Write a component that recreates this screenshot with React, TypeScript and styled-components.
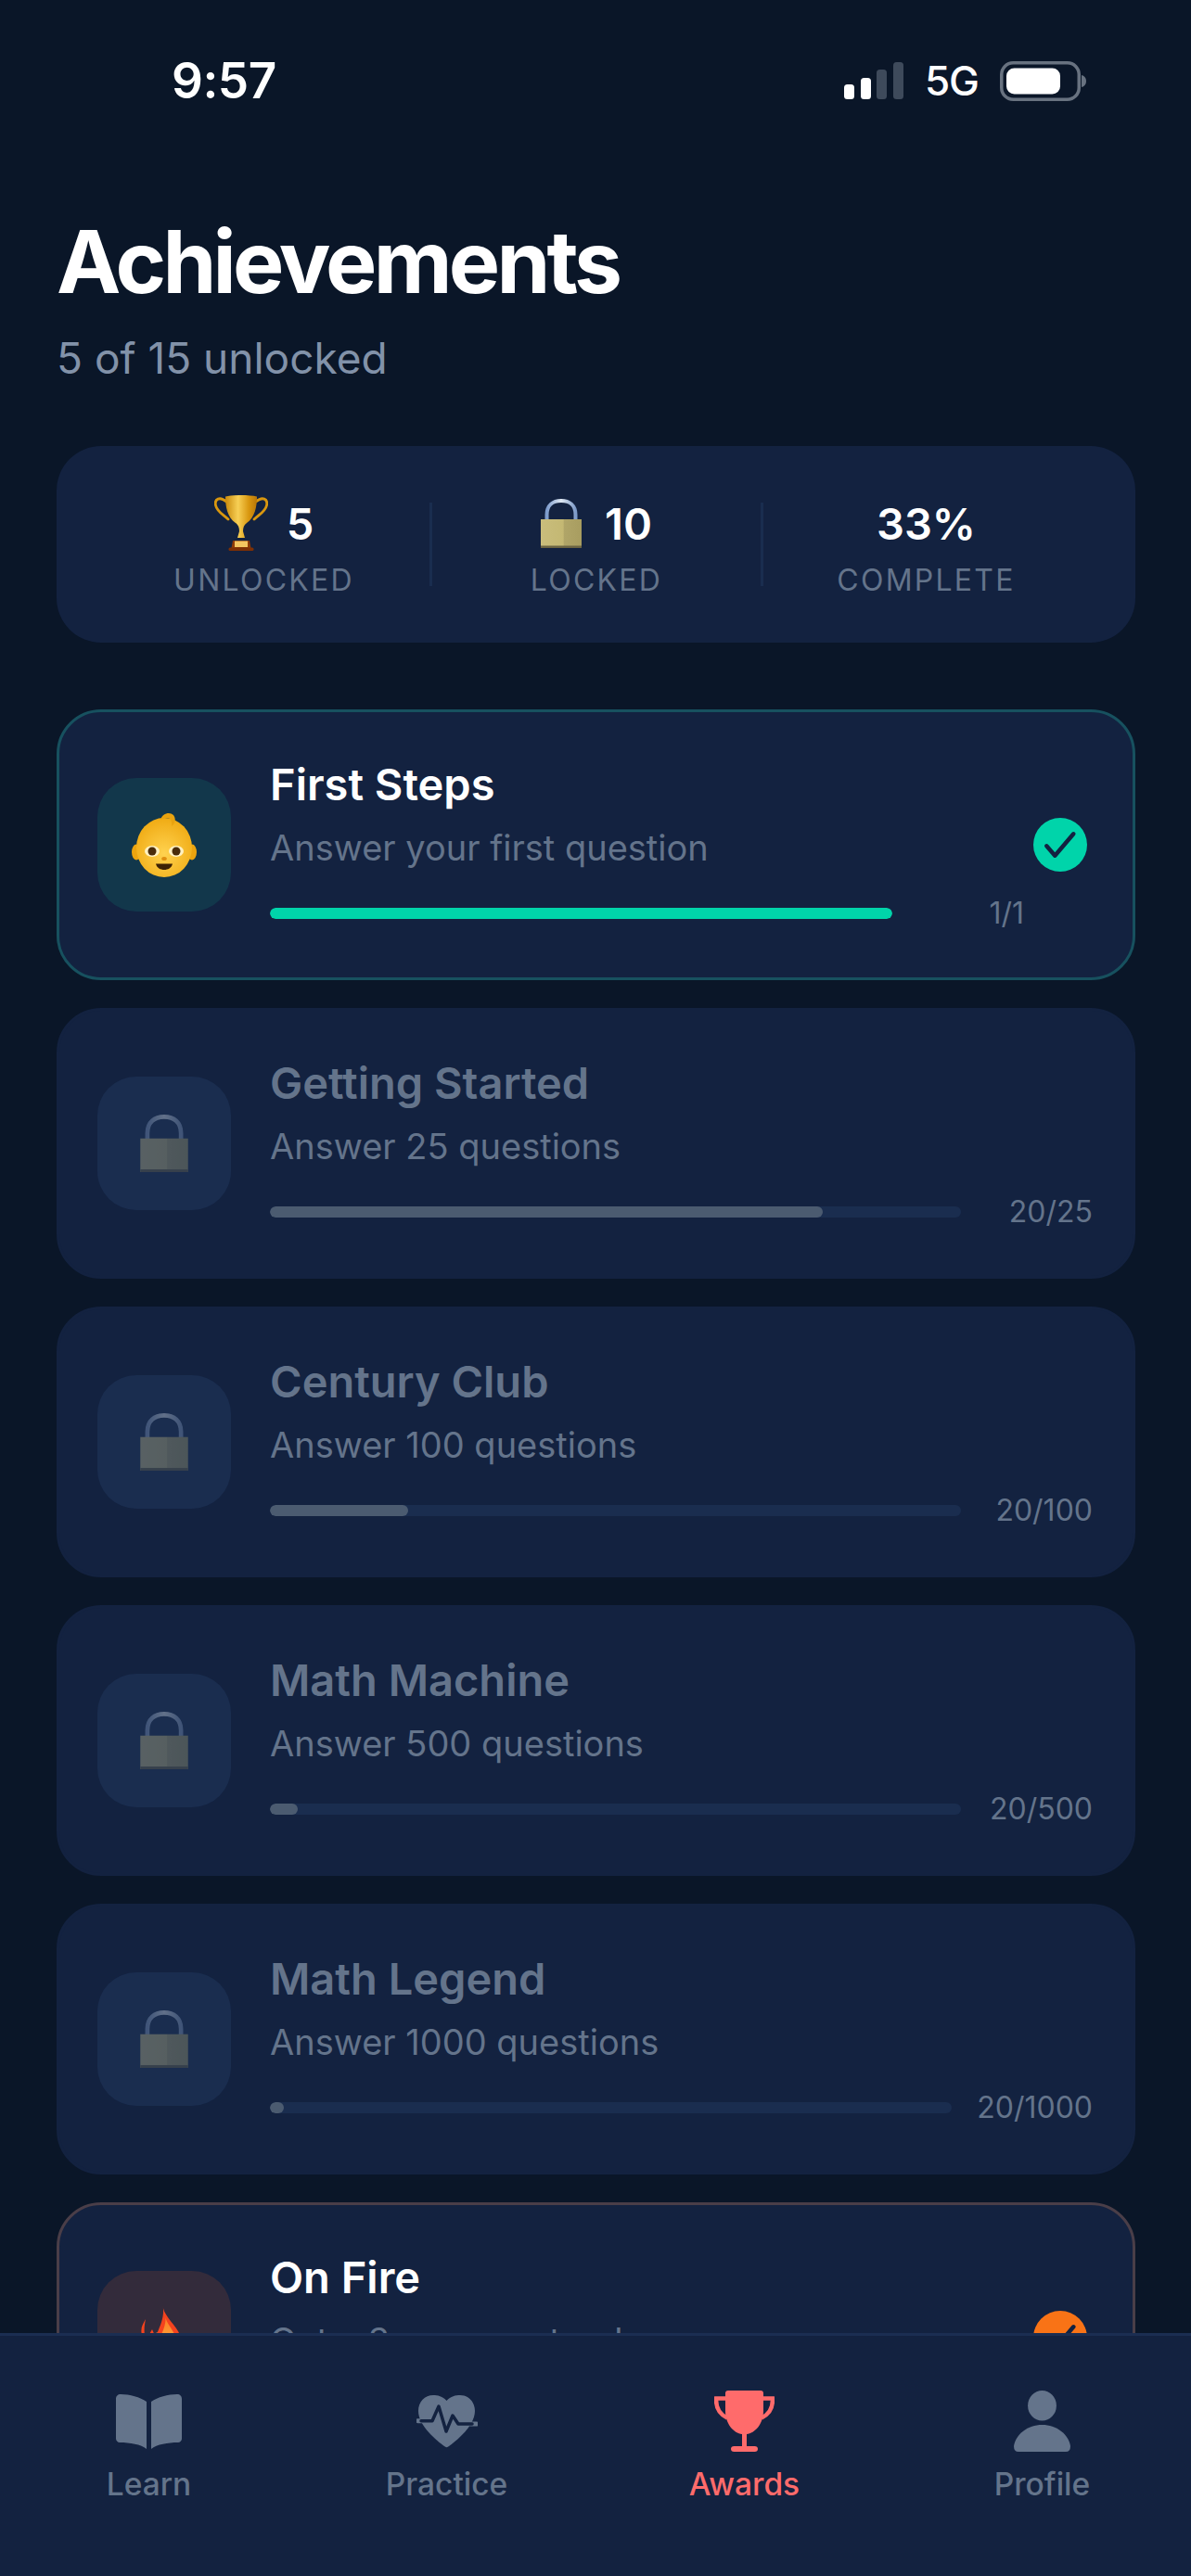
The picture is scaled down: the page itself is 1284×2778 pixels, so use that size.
import React from "react";
import styled, { createGlobalStyle } from "styled-components";

const Global = createGlobalStyle`
  html, body { margin: 0; padding: 0; background: #0a1628; }
  * { box-sizing: border-box; }
`;

const Screen = styled.div`
  width: 1284px;
  height: 2778px;
  display: flex;
  flex-direction: column;
  overflow: hidden;
  background: #0a1628;
  font-family: Inter, "Liberation Sans", sans-serif;
  color: #fff;
`;
const Scroll = styled.main`
  flex: 1;
  min-height: 0;
  overflow: hidden;
`;
const StatusBar = styled.div`
  height: 174px;
  display: flex;
  align-items: center;
  justify-content: space-between;
  padding: 0 113px 0 185px;
`;
const Time = styled.span`
  font-size: 53px;
  font-weight: 600;
  letter-spacing: -0.5px;
`;
const StatusRight = styled.div`
  display: flex;
  align-items: center;
  gap: 23px;
`;
const Net = styled.span`
  font-size: 44px;
  font-weight: 500;
  letter-spacing: -1px;
`;
const Header = styled.header`
  padding: 58px 61px 0;
`;
const Title = styled.h1`
  margin: 0;
  font-size: 93px;
  line-height: 100px;
  font-weight: 700;
  letter-spacing: -3.8px;
`;
const Subtitle = styled.p`
  margin: 26px 0 0;
  font-size: 46px;
  line-height: 56px;
  color: #8292a9;
`;
const Stats = styled.section`
  margin: 67px 60px 0 61px;
  height: 212px;
  border-radius: 48px;
  background: #132240;
  padding: 0 50px 0 45px;
  display: grid;
  grid-template-columns: 357px 3px 354px 3px 1fr;
  align-items: center;
`;
const Stat = styled.div`
  display: flex;
  flex-direction: column;
  align-items: center;
  padding-top: 6px;
`;
const StatValue = styled.div<{ $gap: number }>`
  display: flex;
  align-items: center;
  gap: ${(p) => p.$gap}px;
  height: 60px;
  font-size: 47px;
  font-weight: 600;
`;
const StatLabel = styled.div`
  margin-top: 12px;
  font-size: 32px;
  line-height: 40px;
  letter-spacing: 2.25px;
  color: #64748b;
`;
const Divider = styled.div`
  height: 90px;
  background: #1a2d4f;
`;
const List = styled.section`
  margin: 72px 60px 0 61px;
  display: flex;
  flex-direction: column;
  gap: 30px;
`;
const Card = styled.article<{ $accent?: string }>`
  height: 292px;
  flex: none;
  border-radius: 48px;
  background: #132240;
  border: 3px solid ${(p) => p.$accent ?? "#132240"};
  padding: 0 43px 0 41px;
  display: flex;
  align-items: center;
  gap: 42px;
`;
const IconBox = styled.div<{ $bg: string }>`
  flex: none;
  width: 144px;
  height: 144px;
  border-radius: 42px;
  background: ${(p) => p.$bg};
  display: flex;
  align-items: center;
  justify-content: center;
`;
const DimIcon = styled.span`
  display: flex;
  opacity: 0.36;
  filter: saturate(0.8);
`;
const Body = styled.div`
  flex: 1;
  min-width: 0;
`;
const CardTitle = styled.h2<{ $locked: boolean }>`
  margin: 0;
  font-size: 47px;
  line-height: 56px;
  font-weight: 600;
  color: ${(p) => (p.$locked ? "#64748b" : "#fff")};
`;
const CardDesc = styled.p`
  margin: 16px 0 0;
  font-size: 38px;
  line-height: 48px;
  color: #64748b;
`;
const ProgressRow = styled.div`
  margin-top: 27px;
  height: 40px;
  display: flex;
  align-items: center;
  gap: 27px;
`;
const Track = styled.div`
  flex: 1;
  height: 12px;
  border-radius: 6px;
  background: #1a2d4f;
  overflow: hidden;
`;
const Fill = styled.div<{ $color: string }>`
  height: 100%;
  border-radius: 6px;
  background: ${(p) => p.$color};
`;
const Count = styled.span`
  flex: none;
  min-width: 115px;
  text-align: right;
  font-size: 32px;
  line-height: 40px;
  color: #64748b;
`;
const CheckBadge = styled.svg`
  flex: none;
  margin: 0 6px 0 -32px;
  width: 58px;
  height: 58px;
  display: block;
`;
const TabBar = styled.nav`
  flex: none;
  height: 262px;
  background: #132240;
  border-top: 3px solid #1b2e52;
  display: grid;
  grid-template-columns: repeat(4, 1fr);
`;
const Tab = styled.div<{ $active?: boolean }>`
  display: flex;
  flex-direction: column;
  align-items: center;
  color: ${(p) => (p.$active ? "#ff6b6b" : "#64748b")};
`;
const TabIcon = styled.div`
  height: 66px;
  margin-top: 59px;
  display: flex;
  align-items: center;
  justify-content: center;
`;
const TabLabel = styled.span`
  margin-top: 15px;
  font-size: 33.500px;
  line-height: 40px;
  font-weight: 500;
`;

const SignalIcon = () => (
  <svg width="64" height="40" viewBox="0 0 64 40" aria-hidden>
    <rect x="0" y="24" width="11" height="16" rx="3.5" fill="#fff" />
    <rect x="18" y="17" width="11" height="23" rx="3.5" fill="#fff" />
    <rect x="35" y="8" width="11" height="32" rx="3.5" fill="#3e4a5b" />
    <rect x="53" y="0" width="11" height="40" rx="3.5" fill="#3e4a5b" />
  </svg>
);
const BatteryIcon = () => (
  <svg width="93" height="43" viewBox="0 0 93 43" aria-hidden>
    <rect x="1.75" y="1.75" width="83.5" height="39.5" rx="12.5" fill="none" stroke="#687280" strokeWidth="3.5" />
    <rect x="7" y="7.5" width="58" height="28" rx="8.5" fill="#fff" />
    <path d="M88 15c3 .6 5 3 5 6.5s-2 5.900-5 6.500z" fill="#687280" />
  </svg>
);
const TrophyEmoji = () => (
  <svg width="58" height="60" viewBox="0 0 58 60" aria-hidden>
    <defs>
      <linearGradient id="cupGold" x1="0" x2="1" y1="0" y2="0">
        <stop offset="0" stopColor="#c98a0c" />
        <stop offset="0.4" stopColor="#f7cf55" />
        <stop offset="0.75" stopColor="#d8960f" />
        <stop offset="1" stopColor="#b87608" />
      </linearGradient>
    </defs>
    <path d="M13 7C6 1 0 4 1.500 11 3 18 10 21 15 26M45 7C52 1 58 4 56.500 11 55 18 48 21 43 26" fill="none" stroke="#d9970f" strokeWidth="2.800" strokeLinecap="round" />
    <path d="M12 1.500C20 -.5 38 -.5 46 1.500 46 12 44 24 35 30 32 32 31 35 31 39L33 46H25L27 39C27 35 26 32 23 30 14 24 12 12 12 1.500Z" fill="url(#cupGold)" />
    <path d="M20 49H38L39.500 57H18.500Z" fill="#8f3b08" />
    <rect x="22" y="49.500" width="14" height="6.500" fill="#f3c561" />
    <rect x="15.500" y="56.500" width="27" height="3.500" rx="1.500" fill="#7c2f05" />
  </svg>
);
const LockEmoji = ({ w, h }: { w: number; h: number }) => (
  <svg width={w} height={h} viewBox="0 0 44 53" aria-hidden>
    <defs>
      <linearGradient id="lockBody" x1="0" x2="1" y1="0" y2="0">
        <stop offset="0" stopColor="#c9bd7c" />
        <stop offset="0.55" stopColor="#c4b873" />
        <stop offset="0.57" stopColor="#b0a568" />
        <stop offset="1" stopColor="#a89d60" />
      </linearGradient>
      <linearGradient id="lockShackle" x1="0" x2="1" y1="0" y2="0">
        <stop offset="0" stopColor="#7d9ccd" />
        <stop offset="0.5" stopColor="#dfe8f2" />
        <stop offset="1" stopColor="#7e9bc8" />
      </linearGradient>
    </defs>
    <path d="M6.500 23V17C6.500 7 13 2 22 2S37.500 7 37.500 17V23" fill="none" stroke="url(#lockShackle)" strokeWidth="4" />
    <rect x="0" y="22" width="44" height="31" fill="url(#lockBody)" />
    <rect x="0" y="50.500" width="44" height="2.500" fill="#6b6442" />
  </svg>
);
const BabyEmoji = () => (
  <svg width="70" height="70" viewBox="0 0 70 70" aria-hidden>
    <defs>
      <radialGradient id="babyFace" cx="0.5" cy="0.6" r="0.6">
        <stop offset="0" stopColor="#ffd24f" />
        <stop offset="1" stopColor="#f0ab14" />
      </radialGradient>
    </defs>
    <ellipse cx="5" cy="43" rx="5" ry="8.500" fill="#eca40f" />
    <ellipse cx="65" cy="43" rx="5" ry="8.500" fill="#eca40f" />
    <ellipse cx="35" cy="38" rx="30" ry="32" fill="url(#babyFace)" />
    <path d="M31 8C33 1 41 -1 45 3 48 7 47 12 43 15 44 10 42 6 38 6 35 6 33 7 31 8Z" fill="#e9a30f" />
    <ellipse cx="22" cy="42" rx="8" ry="6" fill="#fff1c2" />
    <ellipse cx="48" cy="42" rx="8" ry="6" fill="#fff1c2" />
    <circle cx="22" cy="42" r="4.500" fill="#4a2c0a" />
    <circle cx="48" cy="42" r="4.500" fill="#4a2c0a" />
    <ellipse cx="35" cy="50" rx="2.800" ry="2" fill="#e08f10" />
    <path d="M26 55.500H44C43 60 39 62 35 62S27 60 26 55.500Z" fill="#3d2205" />
  </svg>
);
const FlameEmoji = () => (
  <svg width="70" height="74" viewBox="0 0 70 74" aria-hidden>
    <defs>
      <linearGradient id="flameCore" x1="0" x2="0" y1="0" y2="1">
        <stop offset="0" stopColor="#fb7d24" />
        <stop offset="0.5" stopColor="#ffa53a" />
        <stop offset="1" stopColor="#ffc94d" />
      </linearGradient>
    </defs>
    <path d="M33.500 2C34 12 44 20 50 30 54 38 56 44 56 50 56 64 46 74 34 74 22 74 12 64 12 50 12 40 18 36 22 28 24 33 25 34 26 35 30 26 36 14 33.500 2Z" fill="#f4431e" />
    <path d="M36.500 15C38 24 50 32 50 50 50 62 42 70 34 70 24 70 18 60 18 50 18 44 24 38 27 31 29 34 30 34 31 35 34 30 37 22 36.500 15Z" fill="url(#flameCore)" />
    <path d="M15 17C12 22 9 27 11 34H14C13 28 14 22 15 17Z" fill="#f4431e" />
  </svg>
);
const Check = ({ color }: { color: string }) => (
  <CheckBadge viewBox="0 0 58 58" aria-hidden>
    <circle cx="29" cy="29" r="29" fill={color} />
    <path d="M14.300 30.300L23.300 40.700L43.300 17.300" fill="none" stroke="#132240" strokeWidth="4.500" strokeLinecap="round" strokeLinejoin="round" />
  </CheckBadge>
);
const BookIcon = () => (
  <svg width="71" height="59" viewBox="0 0 71 59" fill="currentColor" aria-hidden>
    <path d="M0 5C0 2 2 0 5 0 15 0 26 3 33 8V59C27 54 15 52 4 52 2 52 0 50 0 48Z" />
    <path d="M71 5C71 2 69 0 66 0 56 0 45 3 38 8V59C44 54 56 52 67 52 69 52 71 50 71 48Z" />
  </svg>
);
const HeartIcon = () => (
  <svg width="66" height="58" viewBox="0 0 66 58" aria-hidden>
    <path fill="currentColor" d="M32.500 7C28 2 23 1 18 1 9 1 2 8 2 18 2 34 22 50 30 56 31.500 57.500 33.500 57.500 35 56 43 50 63 34 63 18 63 8 56 1 47 1 42 1 37 2 32.500 7Z" />
    <path d="M1.500 28.700H8M58 32H64.500" stroke="currentColor" strokeWidth="5" strokeLinecap="round" fill="none" />
    <path d="M5 28.700H17L24 13 32 40 39 23 45 32H60" fill="none" stroke="#132240" strokeWidth="3.500" strokeLinecap="round" strokeLinejoin="round" />
  </svg>
);
const TrophyIcon = () => (
  <svg width="65" height="66" viewBox="0 0 65 66" aria-hidden>
    <path d="M14 8.500H2.200C1.500 18 5 25 14 29.500M51 8.500H62.800C63.500 18 60 25 51 29.500" fill="none" stroke="currentColor" strokeWidth="4.500" />
    <path fill="currentColor" d="M15 0H50Q53 0 53 3V22C53 36 44 46 35 47V60H43.500Q47 60 47 63T43.500 66H21.500Q18 66 18 63T21.500 60H30V47C21 46 12 36 12 22V3Q12 0 15 0Z" />
  </svg>
);
const PersonIcon = () => (
  <svg width="61" height="66" viewBox="0 0 61 66" fill="currentColor" aria-hidden>
    <ellipse cx="30.500" cy="16.300" rx="15.400" ry="16.300" />
    <path d="M5 66Q0 66 0 60C2 47 15 37 30.500 37S59 47 61 60Q61 66 56 66Z" />
  </svg>
);

const lockedCards = [
  { title: "Getting Started", desc: "Answer 25 questions", current: 20, total: 25 },
  { title: "Century Club", desc: "Answer 100 questions", current: 20, total: 100 },
  { title: "Math Machine", desc: "Answer 500 questions", current: 20, total: 500 },
  { title: "Math Legend", desc: "Answer 1000 questions", current: 20, total: 1000 },
];

export default function App() {
  return (
    <Screen>
      <Global />
      <Scroll>
        <StatusBar>
          <Time>9:57</Time>
          <StatusRight>
            <SignalIcon />
            <Net>5G</Net>
            <BatteryIcon />
          </StatusRight>
        </StatusBar>
        <Header>
          <Title>Achievements</Title>
          <Subtitle>5 of 15 unlocked</Subtitle>
        </Header>
        <Stats>
          <Stat>
            <StatValue $gap={20}>
              <TrophyEmoji />5
            </StatValue>
            <StatLabel>UNLOCKED</StatLabel>
          </Stat>
          <Divider />
          <Stat>
            <StatValue $gap={25}>
              <LockEmoji w={44} h={53} />10
            </StatValue>
            <StatLabel>LOCKED</StatLabel>
          </Stat>
          <Divider />
          <Stat>
            <StatValue $gap={0}>33%</StatValue>
            <StatLabel>COMPLETE</StatLabel>
          </Stat>
        </Stats>
        <List>
          <Card $accent="#17515f">
            <IconBox $bg="#12374b">
              <BabyEmoji />
            </IconBox>
            <Body>
              <CardTitle $locked={false}>First Steps</CardTitle>
              <CardDesc>Answer your first question</CardDesc>
              <ProgressRow>
                <Track>
                  <Fill $color="#00d4aa" style={{ width: "100%" }} />
                </Track>
                <Count>1/1</Count>
              </ProgressRow>
            </Body>
            <Check color="#00d4aa" />
          </Card>
          {lockedCards.map((c) => (
            <Card key={c.title}>
              <IconBox $bg="#1a2d4f">
                <DimIcon>
                  <LockEmoji w={52} h={62} />
                </DimIcon>
              </IconBox>
              <Body>
                <CardTitle $locked>{c.title}</CardTitle>
                <CardDesc>{c.desc}</CardDesc>
                <ProgressRow>
                  <Track>
                    <Fill $color="#4b5b70" style={{ width: `${(c.current / c.total) * 100}%`, minWidth: 15 }} />
                  </Track>
                  <Count>
                    {c.current}/{c.total}
                  </Count>
                </ProgressRow>
              </Body>
            </Card>
          ))}
          <Card $accent="#4a3e48">
            <IconBox $bg="#332b3b">
              <FlameEmoji />
            </IconBox>
            <Body>
              <CardTitle $locked={false}>On Fire</CardTitle>
              <CardDesc>Get a 3 answer streak</CardDesc>
              <ProgressRow>
                <Track>
                  <Fill $color="#f97316" style={{ width: "100%" }} />
                </Track>
                <Count>3/3</Count>
              </ProgressRow>
            </Body>
            <Check color="#f97316" />
          </Card>
        </List>
      </Scroll>
      <TabBar>
        <Tab>
          <TabIcon>
            <BookIcon />
          </TabIcon>
          <TabLabel>Learn</TabLabel>
        </Tab>
        <Tab>
          <TabIcon>
            <HeartIcon />
          </TabIcon>
          <TabLabel>Practice</TabLabel>
        </Tab>
        <Tab $active>
          <TabIcon>
            <TrophyIcon />
          </TabIcon>
          <TabLabel>Awards</TabLabel>
        </Tab>
        <Tab>
          <TabIcon>
            <PersonIcon />
          </TabIcon>
          <TabLabel>Profile</TabLabel>
        </Tab>
      </TabBar>
    </Screen>
  );
}
